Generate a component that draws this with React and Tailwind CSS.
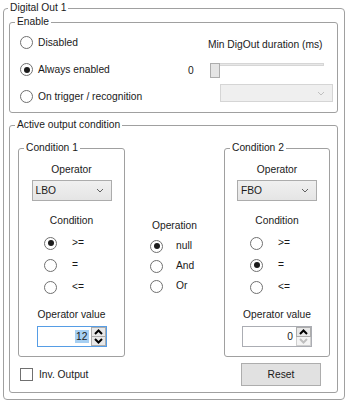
import React from "react";

const Radio = ({ checked }) => (
  <span className="w-[13px] h-[13px] shrink-0 rounded-full border border-[#707070] bg-white flex items-center justify-center">
    {checked && <span className="w-[6px] h-[6px] rounded-full bg-[#1c1c1c]" />}
  </span>
);

const Chevron = ({ color = "#606060" }) => (
  <svg width="8" height="5" viewBox="0 0 8 5">
    <path d="M1 1 L4 4 L7 1" fill="none" stroke={color} strokeWidth="1" />
  </svg>
);

const Combo = ({ value, width }) => (
  <div
    className={`${width} h-[21px] mx-auto border border-[#acacac] bg-gradient-to-b from-[#f0f0f0] to-[#e5e5e5] flex items-center justify-between pl-[3px] pr-[7px]`}
  >
    <span>{value}</span>
    <Chevron />
  </div>
);

const Arrow = ({ up, color }) => (
  <svg width="9" height="6" viewBox="0 0 9 6">
    <path
      d={up ? "M1 5 L4.5 1.5 L8 5" : "M1 1 L4.5 4.5 L8 1"}
      fill="none"
      stroke={color}
      strokeWidth="2"
    />
  </svg>
);

const Spinner = ({ value, focused, downDisabled }) => (
  <div
    className={`w-[70px] h-[21px] mx-auto border ${
      focused ? "border-[#569de5]" : "border-[#abadb3]"
    } bg-white flex`}
  >
    <div className="flex-1 flex items-center justify-end pr-[2px]">
      <span className={focused ? "bg-[#a6cff2] px-[1px] leading-[13px]" : "px-[1px]"}>{value}</span>
    </div>
    <div className="w-[15px] flex flex-col">
      <div className="flex-1 border border-[#acacac] bg-[#e8e8e8] flex items-center justify-center">
        <Arrow up color="#000" />
      </div>
      <div
        className={`flex-1 border border-t-0 ${
          downDisabled ? "border-[#cfcfcf] bg-[#f4f4f4]" : "border-[#acacac] bg-[#e8e8e8]"
        } flex items-center justify-center`}
      >
        <Arrow color={downDisabled ? "#bfbfbf" : "#000"} />
      </div>
    </div>
  </div>
);

const ConditionBox = ({ title, width, op, checked, value, focused, downDisabled }) => (
  <fieldset className={`${width} border border-[#a0a0a0] rounded-[3px]`}>
    <legend className="ml-[5px] px-[2px]">{title}</legend>
    <div className="pt-[8px] pb-[9px] flex flex-col">
      <div className="h-[14px] text-center">Operator</div>
      <div className="mt-[3px]">
        <Combo value={op} width="w-[80px]" />
      </div>
      <div className="mt-[13px] h-[14px] text-center">Condition</div>
      <div className="mt-[4px] flex flex-col pl-[25px]">
        {[">=", "=", "<="].map((c, i) => (
          <div key={c} className="h-[22px] flex items-center gap-[15px]">
            <Radio checked={checked === i} />
            <span>{c}</span>
          </div>
        ))}
      </div>
      <div className="mt-[10px] h-[14px] text-center">Operator value</div>
      <div className="mt-[4px]">
        <Spinner value={value} focused={focused} downDisabled={downDisabled} />
      </div>
    </div>
  </fieldset>
);

export default function App() {
  return (
    <div className="w-[350px] h-[404px] bg-white pt-[1px] pl-[3px] pr-[5px] font-['Liberation_Sans',Arial,sans-serif] text-[10.25px] leading-[14px] text-[#1a1a1a]">
      <fieldset className="h-[399px] border border-[#a0a0a0] rounded-[4px]">
        <legend className="ml-[4px] px-[2px]">Digital Out 1</legend>
        <div className="pl-[5px] pr-[6px]">
          {/* Enable */}
          <fieldset className="border border-[#a0a0a0] rounded-[3px]">
            <legend className="ml-[5px] px-[2px]">Enable</legend>
            <div className="flex pb-[2px]">
              <div className="pl-[10px] flex flex-col">
                {["Disabled", "Always enabled", "On trigger / recognition"].map((l, i) => (
                  <div key={l} className="h-[27px] flex items-center gap-[5px]">
                    <Radio checked={i === 1} />
                    <span>{l}</span>
                  </div>
                ))}
              </div>
              <div className="ml-auto w-[149px] flex flex-col">
                <div className="mt-[9px] h-[14px] pl-[20px]">Min DigOut duration (ms)</div>
                <div className="mt-[11px] h-[15px] flex items-center">
                  <span className="w-[22px]">0</span>
                  <div className="relative w-[114px] h-[15px]">
                    <div className="absolute left-[2px] right-0 top-0 h-[3px] border border-[#d6d6d6] bg-[#e7e7e7]" />
                    <div className="absolute left-0 top-0 w-[10px] h-[15px] border border-[#adadad] bg-[#e5e5e5]" />
                  </div>
                </div>
                <div className="mt-[6px] ml-[32px] w-[113px] h-[18px] border border-[#d5d5d5] bg-[#efefef] flex items-center justify-end pr-[7px]">
                  <Chevron color="#c0c0c0" />
                </div>
              </div>
            </div>
          </fieldset>

          {/* Active output condition */}
          <fieldset className="mt-[5px] border border-[#a0a0a0] rounded-[3px]">
            <legend className="ml-[5px] px-[2px]">Active output condition</legend>
            <div className="pl-[8px] pr-[7px] pb-[6px]">
              <div className="mt-[9px] flex">
                <ConditionBox
                  title="Condition 1"
                  width="w-[107px]"
                  op="LBO"
                  checked={0}
                  value="12"
                  focused
                />
                <div className="flex-1 pt-[78px] flex flex-col">
                  <div className="h-[14px] text-center">Operation</div>
                  <div className="mt-[3px] pl-[25px] flex flex-col">
                    {["null", "And", "Or"].map((l, i) => (
                      <div key={l} className="h-[20px] flex items-center gap-[13px]">
                        <Radio checked={i === 0} />
                        <span>{l}</span>
                      </div>
                    ))}
                  </div>
                </div>
                <ConditionBox
                  title="Condition 2"
                  width="w-[106px]"
                  op="FBO"
                  checked={1}
                  value="0"
                  downDisabled
                />
              </div>
              <div className="mt-[6px] flex items-center justify-between">
                <div className="pl-[2px] flex items-center gap-[6px]">
                  <span className="w-[13px] h-[13px] border border-[#707070] bg-white" />
                  <span>Inv. Output</span>
                </div>
                <button className="mr-[9px] w-[80px] h-[23px] border border-[#adadad] bg-[#e1e1e1] text-center">
                  Reset
                </button>
              </div>
            </div>
          </fieldset>
        </div>
      </fieldset>
    </div>
  );
}
